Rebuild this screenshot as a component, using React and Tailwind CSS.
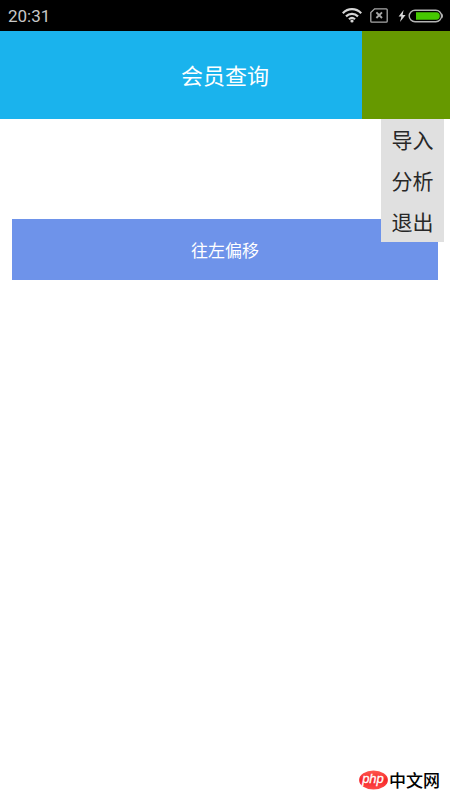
import React from "react";

const menuItems = ["导入", "分析", "退出"];

const WifiIcon = () => (
  <svg width="20" height="15" viewBox="0 0 20 15" fill="none" stroke="#d6d6d6" strokeWidth="2.2" aria-hidden="true">
    <path d="M0.8 5.2C6 -0.2 14 -0.2 19.2 5.2" />
    <path d="M4 8.4C7.4 5 12.6 5 16 8.4" />
    <path d="M7 11.2C8.8 9.5 11.2 9.5 13 11.2" />
    <circle cx="10" cy="13" r="1.6" fill="#d6d6d6" stroke="none" />
  </svg>
);

const NoSimIcon = () => (
  <svg width="18" height="15" viewBox="0 0 18 15" fill="none" stroke="#a8a8a8" strokeWidth="1.3" aria-hidden="true">
    <path d="M4.6 0.8H16.2Q17.2 0.8 17.2 1.8V13.2Q17.2 14.2 16.2 14.2H1.8Q0.8 14.2 0.8 13.2V4.6Z" />
    <path d="M6.4 4.4L12 10M12 4.4L6.4 10" strokeWidth="1.9" />
  </svg>
);

const BatteryIcon = () => (
  <svg width="46" height="14" viewBox="0 0 46 14" aria-hidden="true">
    <path d="M5.6 1L0.6 7.6H3.4L2 13L7.6 6H4.6Z" fill="#d6d6d6" />
    <rect x="11.2" y="1.2" width="32.4" height="11.6" rx="5.8" fill="none" stroke="#b4b4b4" strokeWidth="1.4" />
    <path d="M44 4.5Q46 7 44 9.5Z" fill="#b4b4b4" />
    <path d="M18 3.3H38.2Q41.8 3.5 41.8 7T38.2 10.7H18Z" fill="#46c800" />
  </svg>
);

const StatusBar = () => (
  <div className="flex h-[31px] items-center justify-between bg-black pl-2 pr-1.5">
    <span className="font-['Roboto',sans-serif] text-[17px] leading-6 text-[#c8c8c8]">20:31</span>
    <div className="flex items-center">
      <div className="flex items-center gap-2 pr-2.5">
        <WifiIcon />
        <NoSimIcon />
      </div>
      <BatteryIcon />
    </div>
  </div>
);

const Header = () => (
  <header className="relative flex h-22 items-center justify-center bg-[#1ab3ed]">
    <h1 className="pb-0.5 text-[22px] leading-8 text-white">会员查询</h1>
    <div className="absolute right-0 top-0 h-full w-22">
      <button type="button" aria-label="菜单" className="h-full w-full bg-[#669900]" />
      <ul className="absolute right-1.5 top-full z-10 w-[63px] bg-[#e0e0e0]">
        {menuItems.map((item) => (
          <li key={item}>
            <button
              type="button"
              className="block h-[41px] w-full pb-0.5 text-center text-[21px] leading-8 text-[#282828]"
            >
              {item}
            </button>
          </li>
        ))}
      </ul>
    </div>
  </header>
);

const Logo = () => (
  <div className="flex items-center">
    <svg width="30" height="20" viewBox="0 0 30 20" aria-hidden="true">
      <defs>
        <linearGradient id="logoRed" x1="0" y1="0" x2="0" y2="1">
          <stop offset="0" stopColor="#ff5a50" />
          <stop offset="0.5" stopColor="#f5262a" />
          <stop offset="1" stopColor="#ff4a48" />
        </linearGradient>
      </defs>
      <ellipse cx="14.5" cy="10" rx="14.4" ry="9.6" fill="url(#logoRed)" />
      <text
        x="14"
        y="13"
        textAnchor="middle"
        fontFamily="Liberation Sans, sans-serif"
        fontSize="13"
        fontStyle="italic"
        fill="#ffffff"
        stroke="#ffffff"
        strokeWidth="0.3"
      >
        php
      </text>
    </svg>
    <span className="text-[17px] font-medium leading-6 text-black">中文网</span>
  </div>
);

const App = () => (
  <div className="flex min-h-screen w-full flex-col bg-white font-['Noto_Sans_CJK_SC',sans-serif]">
    <StatusBar />
    <Header />
    <main className="flex-1 px-3 pt-25">
      <button type="button" className="h-[61px] w-full bg-[#6e93ea] text-[17px] leading-6 text-white">
        往左偏移
      </button>
    </main>
    <footer className="flex justify-end px-2.5 pb-2">
      <Logo />
    </footer>
  </div>
);

export default App;
